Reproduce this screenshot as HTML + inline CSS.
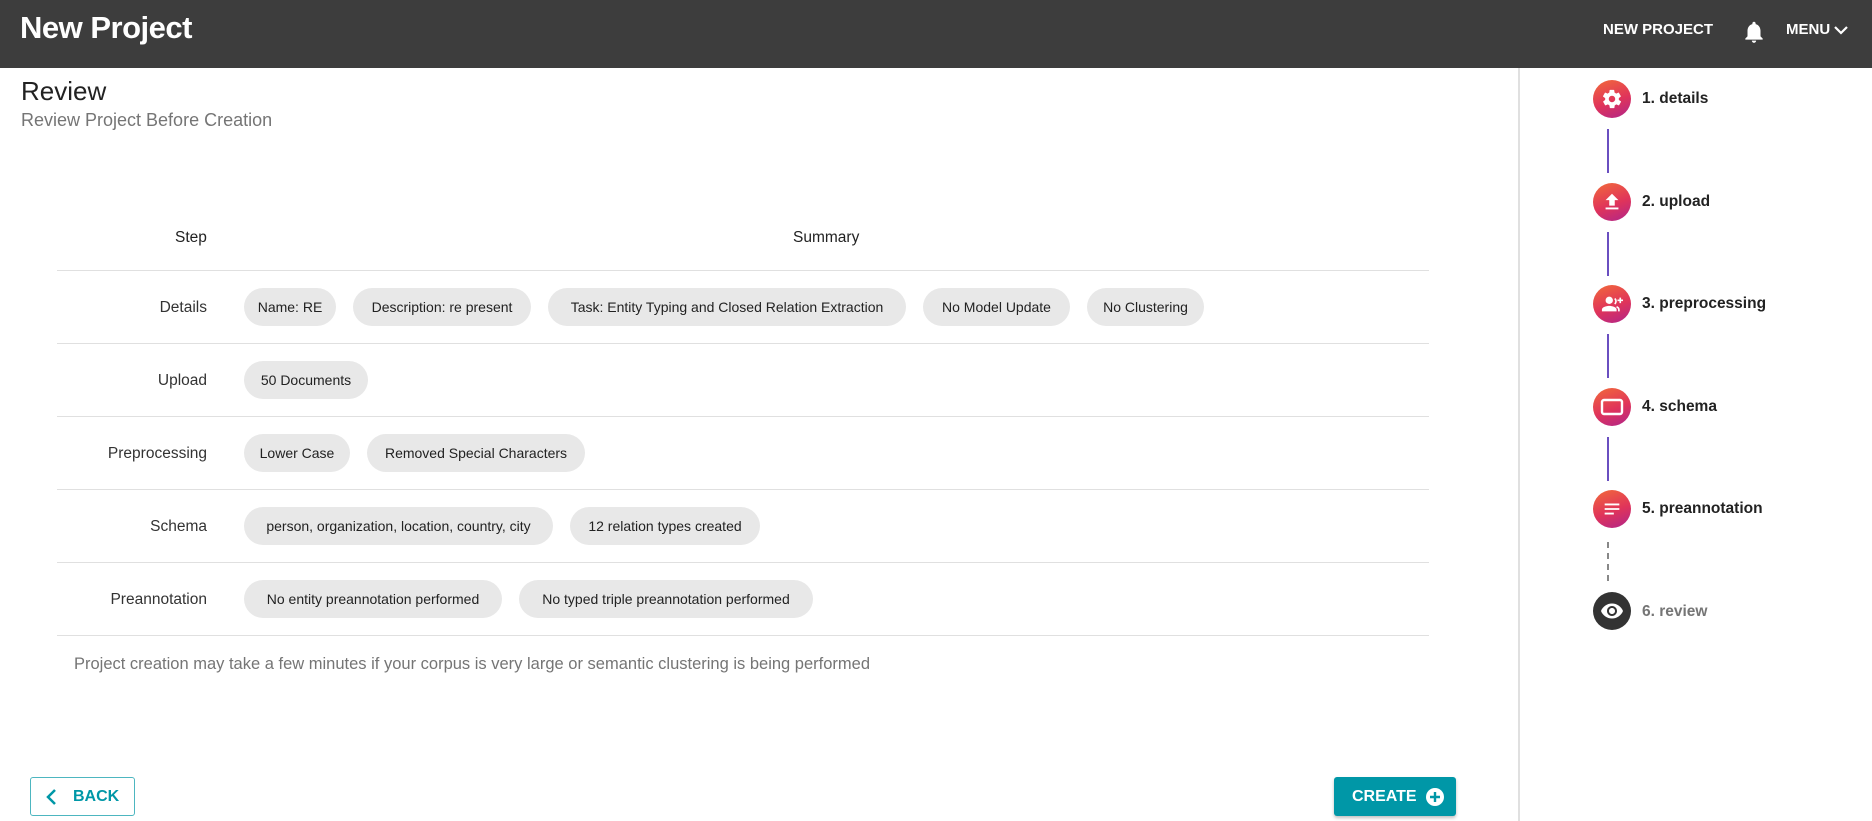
<!DOCTYPE html>
<html><head><meta charset="utf-8"><style>
*{box-sizing:border-box;margin:0;padding:0}
body{width:1872px;height:821px;overflow:hidden;background:#fff;font-family:"Liberation Sans",Arial,sans-serif;position:relative}
.hdr{position:absolute;left:0;top:0;width:1872px;height:68px;background:#3d3d3d;color:#fff}
.hdr .t{position:absolute;left:20px;top:10px;font-size:31px;font-weight:bold;letter-spacing:-0.5px}
.hdr .n{position:absolute;top:21px;font-size:15px;font-weight:bold}
.vl{position:absolute;left:1518px;top:68px;width:2px;height:753px;background:#e0e0e0}
.h1{position:absolute;left:21px;top:76px;font-size:26px;color:#222}
.h2{position:absolute;left:21px;top:110px;font-size:18px;color:#757575}
.row{position:absolute;left:57px;width:1372px;border-top:1px solid #e0e0e0;height:73px}
.lab{position:absolute;right:1222px;top:28px;font-size:15.5px;color:#333;text-align:right;white-space:nowrap}
.chips{position:absolute;left:187px;top:17px;display:flex;gap:17px}
.chip{height:38px;border-radius:19px;background:#e8e8e8;font-size:14px;color:#222;display:flex;align-items:center;justify-content:center;white-space:nowrap}
.stp{position:absolute;left:1593px;width:38px;height:38px;border-radius:50%;background:linear-gradient(160deg,#f26a3a,#e0345a 55%,#b0258a);display:flex;align-items:center;justify-content:center}
.sl{position:absolute;left:1642px;font-size:15.5px;font-weight:bold;color:#222}
.ln{position:absolute;left:1607px;width:2px;height:44px;background:#6a4fc0}
.btn{position:absolute;top:777px;height:39px;border-radius:3px;font-size:16px;font-weight:bold;display:flex;align-items:center}
</style></head><body>
<div class="hdr"><div class="t">New Project</div>
<div class="n" style="left:1603px">NEW PROJECT</div>
<svg style="position:absolute;left:1741px;top:17px" width="26" height="30" viewBox="0 0 24 24"><path fill="#fff" d="M12 22c1.1 0 2-.9 2-2h-4c0 1.1.9 2 2 2zm6-6v-5c0-3.1-1.6-5.6-4.5-6.3V4c0-.8-.7-1.5-1.5-1.5s-1.5.7-1.5 1.5v.7C7.6 5.4 6 7.9 6 11v5l-2 2v1h16v-1l-2-2z"/></svg>
<div class="n" style="left:1786px">MENU</div>
<svg style="position:absolute;left:1834px;top:25px" width="14" height="10" viewBox="0 0 14 10"><path d="M1 2l6 6 6-6" stroke="#fff" stroke-width="2.2" fill="none"/></svg>
</div>
<div class="vl"></div>
<div class="h1">Review</div>
<div class="h2">Review Project Before Creation</div>
<div style="position:absolute;left:175px;top:229px;font-size:15.5px;color:#222">Step</div>
<div style="position:absolute;left:793px;top:229px;font-size:15.5px;color:#222">Summary</div>
<div class="row" style="top:270px"><div class="lab">Details</div><div class="chips">
<div class="chip" style="width:92px">Name: RE</div><div class="chip" style="width:178px">Description: re present</div><div class="chip" style="width:358px">Task: Entity Typing and Closed Relation Extraction</div><div class="chip" style="width:147px">No Model Update</div><div class="chip" style="width:117px">No Clustering</div></div></div>
<div class="row" style="top:343px"><div class="lab">Upload</div><div class="chips"><div class="chip" style="width:124px">50 Documents</div></div></div>
<div class="row" style="top:416px"><div class="lab">Preprocessing</div><div class="chips"><div class="chip" style="width:106px">Lower Case</div><div class="chip" style="width:218px">Removed Special Characters</div></div></div>
<div class="row" style="top:489px"><div class="lab">Schema</div><div class="chips"><div class="chip" style="width:309px">person, organization, location, country, city</div><div class="chip" style="width:190px">12 relation types created</div></div></div>
<div class="row" style="top:562px"><div class="lab">Preannotation</div><div class="chips"><div class="chip" style="width:258px">No entity preannotation performed</div><div class="chip" style="width:294px">No typed triple preannotation performed</div></div></div>
<div class="row" style="top:635px;height:1px"></div>
<div style="position:absolute;left:74px;top:655px;font-size:16.5px;color:#757575">Project creation may take a few minutes if your corpus is very large or semantic clustering is being performed</div>
<div class="btn" style="left:30px;width:105px;border:1px solid #4db6c0;color:#0097a7"><svg style="margin-left:14px" width="12" height="18" viewBox="0 0 12 18"><path d="M10 2L3 9l7 7" stroke="#0097a7" stroke-width="2.5" fill="none"/></svg><span style="margin-left:16px">BACK</span></div>
<div class="btn" style="left:1334px;width:122px;background:#0097a7;color:#fff;box-shadow:0 2px 3px rgba(0,0,0,.25)"><span style="margin-left:18px">CREATE</span><svg style="margin-left:8px" width="20" height="20" viewBox="0 0 20 20"><circle cx="10" cy="10" r="9" fill="#fff"/><path d="M10 5v10M5 10h10" stroke="#0097a7" stroke-width="2.4"/></svg></div>
<div class="stp" style="top:80px"><svg width="22" height="22" viewBox="0 0 24 24"><path fill="#fff" d="M19.4 13c0-.3.1-.7.1-1s0-.7-.1-1l2.1-1.6c.2-.2.2-.4.1-.6l-2-3.5c-.1-.2-.4-.3-.6-.2l-2.5 1c-.5-.4-1.1-.7-1.7-1l-.4-2.600c0-.2-.2-.4-.5-.4h-4c-.2 0-.4.2-.5.4l-.4 2.6c-.6.3-1.2.6-1.7 1l-2.5-1c-.2-.1-.5 0-.6.2l-2 3.5c-.1.2 0 .5.1.6L4.6 11c0 .3-.1.7-.1 1s0 .7.1 1l-2.1 1.6c-.2.2-.2.4-.1.6l2 3.5c.1.2.4.3.6.2l2.5-1c.5.4 1.1.7 1.700 1l.4 2.6c0 .2.2.4.5.4h4c.2 0 .5-.2.5-.4l.4-2.6c.6-.3 1.2-.6 1.7-1l2.5 1c.2.1.5 0 .6-.2l2-3.5c.1-.2.1-.5-.1-.6L19.4 13zM12 15.5c-1.9 0-3.5-1.6-3.5-3.5s1.6-3.5 3.5-3.5 3.5 1.6 3.5 3.5-1.6 3.5-3.5 3.5z"/></svg></div>
<div class="sl" style="top:90px">1. details</div>
<div class="ln" style="top:129px"></div>
<div class="stp" style="top:183px"><svg width="22" height="22" viewBox="0 0 24 24"><path fill="#fff" d="M9 16h6v-6h4l-7-7-7 7h4zm-4 2h14v2H5z"/></svg></div>
<div class="sl" style="top:193px">2. upload</div>
<div class="ln" style="top:232px"></div>
<div class="stp" style="top:285px"><svg width="24" height="22" viewBox="0 0 24 24"><circle cx="9" cy="8" r="4" fill="#fff"/><path fill="#fff" d="M1 20v-2c0-2.7 5.3-4 8-4s8 1.3 8 4v2z"/><path d="M15 6a4 4 0 0 1 0 6M17 15c1.5.7 2.5 1.8 2.5 3v2" stroke="#fff" stroke-width="1.8" fill="none"/><path d="M21 5v6M18 8h6" stroke="#fff" stroke-width="1.8"/></svg></div>
<div class="sl" style="top:295px">3. preprocessing</div>
<div class="ln" style="top:334px"></div>
<div class="stp" style="top:388px"><svg width="24" height="20" viewBox="0 0 24 20"><rect x="2" y="3" width="20" height="14" rx="2" fill="none" stroke="#fff" stroke-width="2.4"/></svg></div>
<div class="sl" style="top:398px">4. schema</div>
<div class="ln" style="top:437px"></div>
<div class="stp" style="top:490px"><svg width="22" height="22" viewBox="0 0 24 24"><path d="M4 7h16M4 12h16M4 17h10" stroke="#fff" stroke-width="2"/></svg></div>
<div class="sl" style="top:500px">5. preannotation</div>
<div style="position:absolute;left:1607px;top:542px;width:2px;height:42px;background:repeating-linear-gradient(#888 0 6px,transparent 6px 11px)"></div>
<div class="stp" style="top:592px;background:#333"><svg width="24" height="24" viewBox="0 0 24 24"><path fill="#fff" d="M12 4.5C7 4.5 2.7 7.6 1 12c1.7 4.4 6 7.5 11 7.5s9.3-3.1 11-7.5c-1.7-4.4-6-7.5-11-7.5zM12 17c-2.8 0-5-2.2-5-5s2.2-5 5-5 5 2.2 5 5-2.2 5-5 5zm0-8c-1.7 0-3 1.3-3 3s1.3 3 3 3 3-1.3 3-3-1.3-3-3-3z"/></svg></div>
<div class="sl" style="top:603px;color:#757575">6. review</div>
</body></html>
